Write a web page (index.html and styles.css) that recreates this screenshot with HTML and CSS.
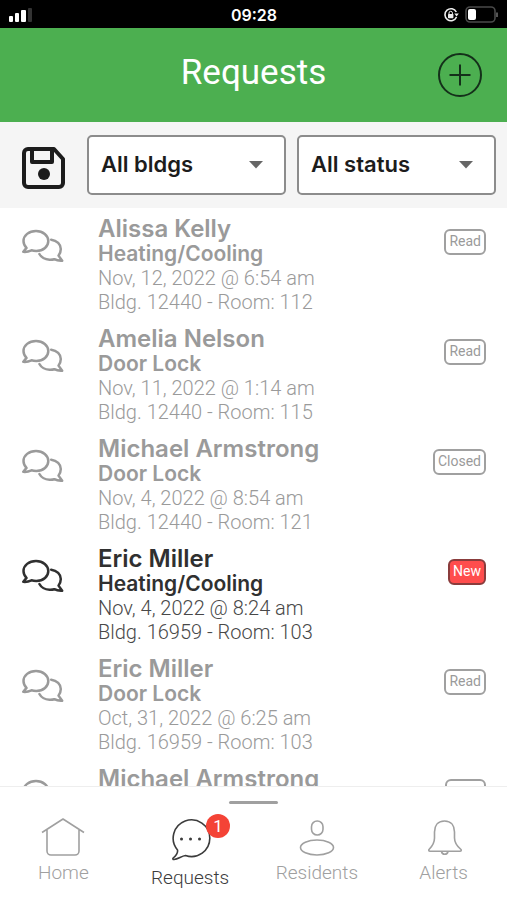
FILE: index.html
```html
<!DOCTYPE html>
<html lang="en">
<head>
<meta charset="utf-8">
<meta name="viewport" content="width=device-width, initial-scale=1">
<title>Requests</title>
<link rel="stylesheet" href="styles.css">
</head>
<body>
<svg class="defs" width="0" height="0" aria-hidden="true">
  <symbol id="chat" viewBox="0 0 42 34">
    <path d="M14 2C7 2 1.500 6.300 1.500 12c0 2.700 1.100 5 3 6.900L1.300 22.800c3.300.400 6.300-.600 8.200-1.500 1.500.500 3.100.700 4.800.700 7.200 0 12-4.500 12-10S21 2 14 2z"/>
    <path d="M29.200 10.700c5.800.700 9.600 4.700 9.600 9.200 0 2.700-1.100 5-2.300 6.700l3.700 5.200c-3.200.200-6-.500-7.900-1.600-1.600.500-3.200.600-4.800.500-4.500-.200-8.300-2.400-10.100-5.700"/>
  </symbol>
</svg>

<div class="statusbar">
  <svg class="signal" viewBox="0 0 24 16" aria-hidden="true">
    <rect x="0" y="9" width="4" height="6" rx="1" fill="#fff"/>
    <rect x="6" y="6" width="4" height="9" rx="1" fill="#fff"/>
    <rect x="12" y="3" width="5" height="12" rx="1" fill="#fff"/>
    <rect x="19" y="1" width="4" height="14" rx="1" fill="#333"/>
  </svg>
  <time>09:28</time>
  <div class="indicators">
    <svg class="lock" viewBox="0 0 16 16" aria-hidden="true">
      <path d="M13.300 5A6 6 0 1 0 13.500 10" fill="none" stroke="#eee" stroke-width="1.600"/>
      <path d="M11.300 6.400h4.500l-2.200 3.200z" fill="#eee"/>
      <rect x="5" y="7" width="5.400" height="4.200" rx=".6" fill="#eee"/>
      <path d="M6 7.300V6a1.700 1.700 0 0 1 3.400 0v1.300" fill="none" stroke="#eee"/>
    </svg>
    <svg class="battery" viewBox="0 0 34 18" aria-hidden="true">
      <rect x="1" y="1" width="29" height="15" rx="4" fill="none" stroke="#4a4a4a" stroke-width="1.600"/>
      <rect x="3" y="3" width="8" height="11" rx="2" fill="#fff"/>
      <path d="M32 6.500v4.500" stroke="#555" stroke-width="2"/>
    </svg>
  </div>
</div>

<header class="header">
  <h1>Requests</h1>
  <button class="add" type="button" aria-label="Add request">
    <svg viewBox="0 0 44 44" aria-hidden="true"><circle cx="22" cy="22" r="21"/><path d="M22 11.500v21M11.500 22h21"/></svg>
  </button>
</header>

<form class="filters">
  <button class="save" type="button" aria-label="Save filters">
    <svg viewBox="0 0 44 44" aria-hidden="true">
      <path d="M6 3h26l9 10v24a4 4 0 0 1-4 4H6a4 4 0 0 1-4-4V7a4 4 0 0 1 4-4z" stroke-width="4"/>
      <path d="M10 4v12h20V4" stroke-width="4"/>
      <circle cx="22" cy="28" r="6"/>
    </svg>
  </button>
  <div class="select">
    <select aria-label="Building"><option>All bldgs</option></select>
    <svg viewBox="0 0 14 8" aria-hidden="true"><path d="M0 0h14L7 7.500z"/></svg>
  </div>
  <div class="select">
    <select aria-label="Status"><option>All status</option></select>
    <svg viewBox="0 0 14 8" aria-hidden="true"><path d="M0 0h14L7 7.500z"/></svg>
  </div>
</form>

<main class="list">
  <article class="request">
    <svg class="chat" aria-hidden="true"><use href="#chat"/></svg>
    <div class="details"><h2>Alissa Kelly</h2><h3>Heating/Cooling</h3><p>Nov, 12, 2022 @ 6:54 am</p><p>Bldg. 12440 - Room: 112</p></div>
    <span class="tag">Read</span>
  </article>
  <article class="request">
    <svg class="chat" aria-hidden="true"><use href="#chat"/></svg>
    <div class="details"><h2>Amelia Nelson</h2><h3>Door Lock</h3><p>Nov, 11, 2022 @ 1:14 am</p><p>Bldg. 12440 - Room: 115</p></div>
    <span class="tag">Read</span>
  </article>
  <article class="request">
    <svg class="chat" aria-hidden="true"><use href="#chat"/></svg>
    <div class="details"><h2>Michael Armstrong</h2><h3>Door Lock</h3><p>Nov, 4, 2022 @ 8:54 am</p><p>Bldg. 12440 - Room: 121</p></div>
    <span class="tag">Closed</span>
  </article>
  <article class="request unread">
    <svg class="chat" aria-hidden="true"><use href="#chat"/></svg>
    <div class="details"><h2>Eric Miller</h2><h3>Heating/Cooling</h3><p>Nov, 4, 2022 @ 8:24 am</p><p>Bldg. 16959 - Room: 103</p></div>
    <span class="tag">New</span>
  </article>
  <article class="request">
    <svg class="chat" aria-hidden="true"><use href="#chat"/></svg>
    <div class="details"><h2>Eric Miller</h2><h3>Door Lock</h3><p>Oct, 31, 2022 @ 6:25 am</p><p>Bldg. 16959 - Room: 103</p></div>
    <span class="tag">Read</span>
  </article>
  <article class="request">
    <svg class="chat" aria-hidden="true"><use href="#chat"/></svg>
    <div class="details"><h2>Michael Armstrong</h2></div>
    <span class="tag"></span>
  </article>
</main>

<footer class="dock">
  <div class="handle"></div>
  <nav class="tabs">
    <a href="#home">
      <svg viewBox="0 0 44 40" aria-hidden="true"><path d="M1 15.500L22 2l21 13.500M6 12.500V34a4 4 0 0 0 4 4h24a4 4 0 0 0 4-4V12.500"/></svg>
      <span>Home</span>
    </a>
    <a href="#requests" class="active" aria-current="page">
      <span class="icon">
        <svg viewBox="0 0 44 44" aria-hidden="true"><path d="M9.500 32.500A18.300 18.300 0 1 1 17.500 38c-4 .500-7 3.300-11.500 4-1 .100-1.500-.800-.800-1.500 2.600-2.200 4.900-5 4.300-8z"/><path class="dots" d="M13.500 21.500h.01M22.500 21.500h.01M31.500 21.500h.01"/></svg>
        <b class="count">1</b>
      </span>
      <span>Requests</span>
    </a>
    <a href="#residents">
      <svg viewBox="0 0 44 40" aria-hidden="true"><rect x="16.500" y="4" width="11.500" height="14" rx="5.700"/><ellipse cx="22" cy="30.500" rx="16.500" ry="7.500"/></svg>
      <span>Residents</span>
    </a>
    <a href="#alerts">
      <svg viewBox="0 0 44 40" aria-hidden="true"><path d="M22.500 4C15.500 4 12.500 9 12.500 15v6c0 6-3 9-5.500 11.500-.700 1 0 1.700 1 1.700h30c1 0 1.700-.700 1-1.700C36 30 32.500 27 32.500 21v-6c0-6-3-11-10-11zM19.500 34.500a3.300 3.300 0 0 0 6.500 0"/></svg>
      <span>Alerts</span>
    </a>
  </nav>
</footer>
</body>
</html>
```
FILE: styles.css
```css
* { box-sizing: border-box; }

body {
  margin: 0;
  height: 100vh;
  display: flex;
  flex-direction: column;
  background: #fff;
  font-family: Roboto, sans-serif;
  font-weight: 300;
  overflow: hidden;
}

h1, h2, h3, p { margin: 0; }
button { padding: 0; border: 0; background: none; color: inherit; }
svg { display: block; fill: none; }
.defs { position: absolute; }

.statusbar {
  display: grid;
  grid-template-columns: 1fr auto 1fr;
  align-items: center;
  height: 28px;
  padding: 0 8px 0 9px;
  background: #000;
  color: #fff;
}
.statusbar time { font: 600 16px/28px Inter, sans-serif; padding-top: 1px; }
.signal { width: 24px; height: 16px; }
.indicators { display: flex; justify-content: flex-end; align-items: center; gap: 6px; }
.lock { width: 16px; height: 16px; }
.battery { width: 34px; height: 18px; }

.header {
  display: grid;
  grid-template-columns: 1fr auto 1fr;
  align-items: center;
  height: 94px;
  padding: 0 25px;
  background: #4caf50;
  color: #fff;
}
.header h1 { grid-column: 2; font-size: 35px; font-weight: 400; line-height: 44px; padding-bottom: 4px; }
.add { justify-self: end; width: 44px; height: 44px; }
.add svg { stroke: #14301a; stroke-width: 2; }

.filters {
  display: flex;
  align-items: center;
  gap: 11px;
  height: 86px;
  padding: 0 11px 0 22px;
  background: #f5f5f5;
}
.save { flex: none; width: 44px; height: 44px; margin-right: 10px; padding-top: 3px; }
.save svg { width: 44px; height: 44px; stroke: #1c1c1c; stroke-linejoin: round; }
.save circle { fill: #1c1c1c; stroke: none; }
.select { position: relative; flex: 1; }
.select select {
  appearance: none;
  width: 100%;
  height: 60px;
  padding: 0 40px 2px 12px;
  border: 2px solid #8c8c8c;
  border-radius: 5px;
  background: #fff;
  color: #1c1c1c;
  font: 600 22px/26px Inter, sans-serif;
}
.select svg { position: absolute; right: 23px; top: 26px; width: 14px; height: 8px; fill: #666; pointer-events: none; }

.list {
  flex: 1;
  min-height: 0;
  overflow: hidden;
  padding: 8px 21px 0 22px;
}
.request { display: flex; align-items: flex-start; padding-bottom: 12px; color: #9a9a9a; }
.chat { flex: none; width: 42px; height: 34px; margin: 13px 34px 0 0; stroke: currentColor; stroke-width: 2.500; stroke-linejoin: round; stroke-linecap: round; }
.details { flex: 1; }
.details h2 { font: 600 24px/26px Inter, sans-serif; }
.details h3 { font: 600 21px/24px Inter, sans-serif; }
.details p { font-size: 20px; line-height: 24px; }
.tag {
  min-width: 41px;
  min-height: 26px;
  margin-top: 13px;
  padding: 0 3px 2px;
  border: 2px solid #a0a0a0;
  border-radius: 6px;
  font-size: 14px;
  font-weight: 400;
  line-height: 20px;
  text-align: center;
}
.unread { color: #303030; }
.unread p { color: #484848; }
.unread .tag { min-width: 37px; background: #ff4d4d; border-color: #8a3c3c; color: #fff; }

.dock { flex: none; height: 114px; border-top: 1px solid #eee; background: #fff; }
.handle { width: 49px; height: 3px; margin: 14px auto 0; border-radius: 2px; background: #a0a0a0; }
.tabs { display: grid; grid-template-columns: repeat(4, 1fr); padding-top: 13px; }
.tabs a {
  display: flex;
  flex-direction: column;
  align-items: center;
  gap: 4px;
  color: #a0a0a0;
  font-size: 19px;
  line-height: 24px;
  text-decoration: none;
}
.tabs svg { width: 44px; height: 40px; stroke: currentColor; stroke-width: 1.600; stroke-linejoin: round; }
.tabs .active { color: #3c3c3c; }
.icon { position: relative; }
.tabs .active svg { height: 45px; }
.dots { stroke-width: 3; stroke-linecap: round; }
.count {
  position: absolute;
  left: 38px;
  top: -3px;
  width: 24px;
  height: 24px;
  border-radius: 50%;
  background: #f44336;
  color: #fff;
  font-size: 17px;
  font-weight: 400;
  line-height: 24px;
  text-align: center;
}
```
